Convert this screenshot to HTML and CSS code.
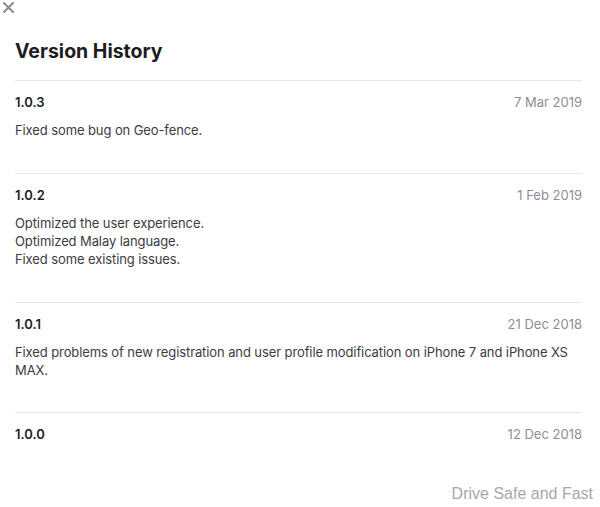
FILE: index.html
```html
<!DOCTYPE html>
<html>
<head>
<meta charset="utf-8">
<link rel="stylesheet" href="styles.css">
</head>
<body>
<div class="page">
  <div class="close">
    <svg width="11" height="11" viewBox="0 0 11 11"><path d="M1 1L10 10M10 1L1 10" stroke="#8c8c8c" stroke-width="2" stroke-linecap="round"/></svg>
  </div>
  <h1 class="title">Version History</h1>
  <div class="list">
    <div class="entry">
      <div class="head"><span class="ver">1.0.3</span><span class="date">7 Mar 2019</span></div>
      <div class="notes">Fixed some bug on Geo-fence.</div>
    </div>
    <div class="entry">
      <div class="head"><span class="ver">1.0.2</span><span class="date">1 Feb 2019</span></div>
      <div class="notes">Optimized the user experience.<br>Optimized Malay language.<br>Fixed some existing issues.</div>
    </div>
    <div class="entry">
      <div class="head"><span class="ver">1.0.1</span><span class="date">21 Dec 2018</span></div>
      <div class="notes">Fixed problems of new registration and user profile modification on iPhone 7 and iPhone XS MAX.</div>
    </div>
    <div class="entry">
      <div class="head"><span class="ver">1.0.0</span><span class="date">12 Dec 2018</span></div>
    </div>
  </div>
  <div class="watermark">Drive Safe and Fast</div>
</div>
</body>
</html>
```
FILE: styles.css
```css
html, body {
  margin: 0;
  padding: 0;
  background: #ffffff;
}
.page {
  width: 600px;
  height: 507px;
  position: relative;
  font-family: Inter, "Noto Sans", sans-serif;
  overflow: hidden;
}
.close {
  position: absolute;
  left: 3px;
  top: 2px;
  width: 11px;
  height: 11px;
}
.close svg { display: block; }
.title {
  margin: 0;
  padding: 40px 0 0 15px;
  font-size: 19.5px;
  font-weight: 700;
  color: #1d1d1f;
  line-height: 22px;
  letter-spacing: 0;
}
.list {
  margin: 18px 18px 0 15px;
}
.entry {
  border-top: 1px solid #e6e6e6;
  padding: 12px 0 0 0;
  height: 80px;
}
.entry:nth-child(2) { height: 116px; }
.entry:nth-child(3) { height: 97px; }
.head {
  display: flex;
  justify-content: space-between;
  align-items: baseline;
  line-height: 18px;
}
.ver {
  font-size: 13px;
  font-weight: 600;
  color: #1d1d1f;
}
.date {
  font-size: 13px;
  color: #8e8e93;
}
.notes {
  margin-top: 10px;
  font-size: 13px;
  letter-spacing: -0.1px;
  line-height: 18px;
  color: #3c3c3e;
}
.watermark {
  position: absolute;
  right: 7px;
  bottom: 4px;
  font-family: "Liberation Sans", Arial, sans-serif;
  font-size: 16px;
  color: #a8a8a8;
}
```
